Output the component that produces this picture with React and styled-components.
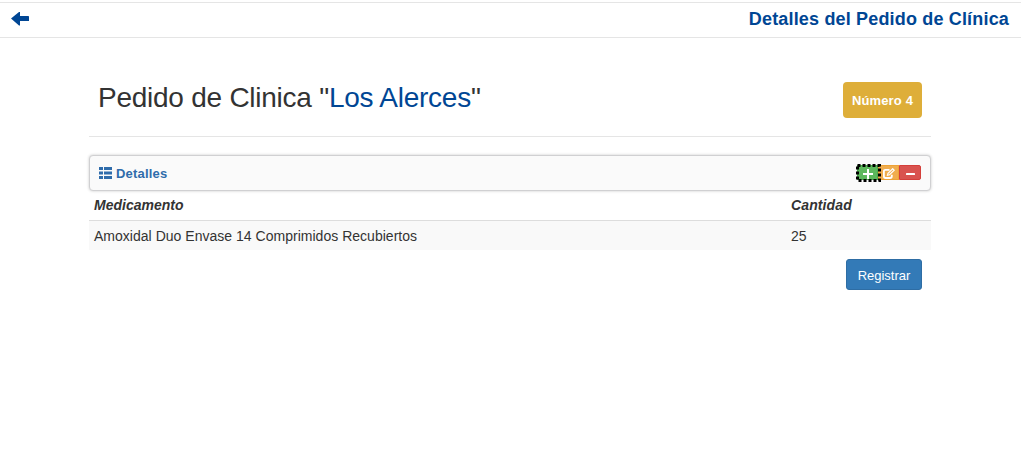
import React from "react";
import styled, { createGlobalStyle } from "styled-components";

const GlobalStyle = createGlobalStyle`
  * { box-sizing: border-box; }
  body {
    margin: 0;
    background: #fff;
    color: #333;
    font: 14px/20px "Liberation Sans", Arial, sans-serif;
  }
  button { font-family: inherit; }
`;

const Page = styled.div`
  padding-top: 2px;
`;

const TopBar = styled.header`
  display: flex;
  justify-content: space-between;
  height: 36px;
  padding: 0 12px 0 11px;
  border-top: 1px solid #e5e5e5;
  border-bottom: 1px solid #e5e5e5;
  color: #004694;
`;

const BackButton = styled.button`
  display: flex;
  width: 19px;
  height: 14px;
  margin-top: 9px;
  padding: 0;
  border: 0;
  background: none;
  color: inherit;
`;

const PageTitle = styled.h1`
  margin: 6px 0 0;
  font-size: 18px;
  line-height: 20px;
  font-weight: bold;
  letter-spacing: 0.17px;
  white-space: nowrap;
`;

const Content = styled.main`
  width: 842px;
  margin: 44px 0 0 89px;
`;

const OrderHeader = styled.div`
  display: flex;
  justify-content: space-between;
  height: 55px;
  padding: 0 9px;
  border-bottom: 1px solid #e5e5e5;
`;

const OrderTitle = styled.h2`
  margin: 0;
  font-size: 28px;
  line-height: 32px;
  font-weight: normal;
  letter-spacing: -0.25px;
  white-space: nowrap;
`;

const ClinicName = styled.span`
  color: #004694;
`;

const NumberBadge = styled.span`
  width: 79px;
  height: 36px;
  border-radius: 4px;
  background: #deae39;
  color: #fff;
  font-size: 13px;
  font-weight: bold;
  line-height: 37px;
  letter-spacing: 0.15px;
  text-align: center;
  white-space: nowrap;
`;

const Panel = styled.div`
  display: flex;
  align-items: center;
  justify-content: space-between;
  height: 36px;
  margin-top: 18px;
  padding: 0 9px;
  border: 1px solid #d0d0d2;
  border-radius: 4px;
  background: #fafafa;
  box-shadow: 0 0 3px rgba(0, 0, 0, 0.22);
`;

const PanelTitle = styled.div`
  display: flex;
  align-items: center;
  gap: 4px;
  color: #2f6cab;
  font-size: 13px;
  font-weight: bold;
  letter-spacing: 0.2px;
`;

const PanelLabel = styled.span`
  padding-top: 1px;
`;

const Actions = styled.div`
  display: flex;
  height: 15px;
  margin-bottom: 1px;
`;

const tones = {
  green: ["#5cb85c", "#4cae4c"],
  orange: ["#f0ad4e", "#eea236"],
  red: ["#d9534f", "#d43f3a"],
};

const ActionButton = styled.button`
  display: flex;
  align-items: center;
  justify-content: center;
  width: ${(p) => (p.$tone === "red" ? 22 : 21)}px;
  height: 15px;
  padding: 2px 0 0;
  border: 1px solid ${(p) => tones[p.$tone][1]};
  border-radius: ${(p) => (p.$tone === "red" ? "0 2px 2px 0" : "0")};
  background: ${(p) => tones[p.$tone][0]};
  color: #fff;
`;

const FocusedAction = styled.div`
  position: relative;
  z-index: 1;
  display: flex;
`;

const FocusRing = styled.svg`
  position: absolute;
  left: -1px;
  top: -1px;
`;

const Table = styled.table`
  width: 100%;
  border-collapse: separate;
  border-spacing: 0;
  table-layout: fixed;
`;

const HeadCell = styled.th`
  width: ${(p) => p.$width};
  height: 30px;
  padding: 0 5px 1px;
  border-bottom: 1px solid #ddd;
  font-style: italic;
  letter-spacing: ${(p) => p.$tracking || "normal"};
  text-align: left;
`;

const Cell = styled.td`
  height: 29px;
  padding: 1px 5px 0;
  background: #f9f9f9;
  letter-spacing: 0.02px;
  white-space: nowrap;
`;

const Footer = styled.div`
  display: flex;
  justify-content: flex-end;
  padding: 9px 9px 0;
`;

const SubmitButton = styled.button`
  width: 76px;
  height: 31px;
  padding: 2px 0 0;
  border: 1px solid #2e6da4;
  border-radius: 3px;
  background: #337ab7;
  color: #fff;
  font-size: 13px;
`;

export default function App() {
  return (
    <Page>
      <GlobalStyle />
      <TopBar>
        <BackButton aria-label="Volver">
          <svg width="19" height="14" viewBox="0 0 19 14" fill="currentColor">
            <path d="M0 6.5 8 0H9V4H17.3Q18 4 18 4.7V9H9V13.5H8Z" />
          </svg>
        </BackButton>
        <PageTitle>Detalles del Pedido de Clínica</PageTitle>
      </TopBar>
      <Content>
        <OrderHeader>
          <OrderTitle>
            Pedido de Clinica "<ClinicName>Los Alerces</ClinicName>"
          </OrderTitle>
          <NumberBadge>Número 4</NumberBadge>
        </OrderHeader>
        <Panel>
          <PanelTitle>
            <svg width="13" height="12" viewBox="0 0 13 12" fill="currentColor">
              <path d="M0 0h4v3H0zM5 0h8v3H5zM0 4.5h4v3H0zM5 4.5h8v3H5zM0 9h4v3H0zM5 9h8v3H5z" />
            </svg>
            <PanelLabel>Detalles</PanelLabel>
          </PanelTitle>
          <Actions>
            <FocusedAction>
              <ActionButton $tone="green" aria-label="Agregar">
                <svg width="10" height="10" viewBox="0 0 10 10" fill="currentColor">
                  <path d="M4 0h2v4h4v2H6v4H4V6H0V4h4z" />
                </svg>
              </ActionButton>
              <FocusRing width="26" height="18" viewBox="0 0 26 18">
                <rect x="1.5" y="1.5" width="22" height="15" fill="none" stroke="#000" strokeWidth="3" strokeDasharray="3 2" />
              </FocusRing>
            </FocusedAction>
            <ActionButton $tone="orange" aria-label="Editar">
              <svg width="12" height="11" viewBox="0 0 12 11" fill="none" stroke="currentColor" strokeWidth="1.8">
                <path d="M6.5 1.8H2.5Q.9 1.8.9 3.5V8.3Q.9 10 2.5 10H7Q8.8 10 8.8 8.3V6.8" />
                <path d="M4.5 7.2 5 5.2 9.7.7 11.2 2.2 6.5 6.8Z" strokeWidth="1.2" />
              </svg>
            </ActionButton>
            <ActionButton $tone="red" aria-label="Quitar">
              <svg width="9" height="11" viewBox="0 0 9 11" fill="currentColor">
                <rect y="5" width="9" height="2" rx=".5" />
              </svg>
            </ActionButton>
          </Actions>
        </Panel>
        <Table>
          <thead>
            <tr>
              <HeadCell $width="697px">Medicamento</HeadCell>
              <HeadCell $tracking="0.12px">Cantidad</HeadCell>
            </tr>
          </thead>
          <tbody>
            <tr>
              <Cell>Amoxidal Duo Envase 14 Comprimidos Recubiertos</Cell>
              <Cell>25</Cell>
            </tr>
          </tbody>
        </Table>
        <Footer>
          <SubmitButton>Registrar</SubmitButton>
        </Footer>
      </Content>
    </Page>
  );
}
